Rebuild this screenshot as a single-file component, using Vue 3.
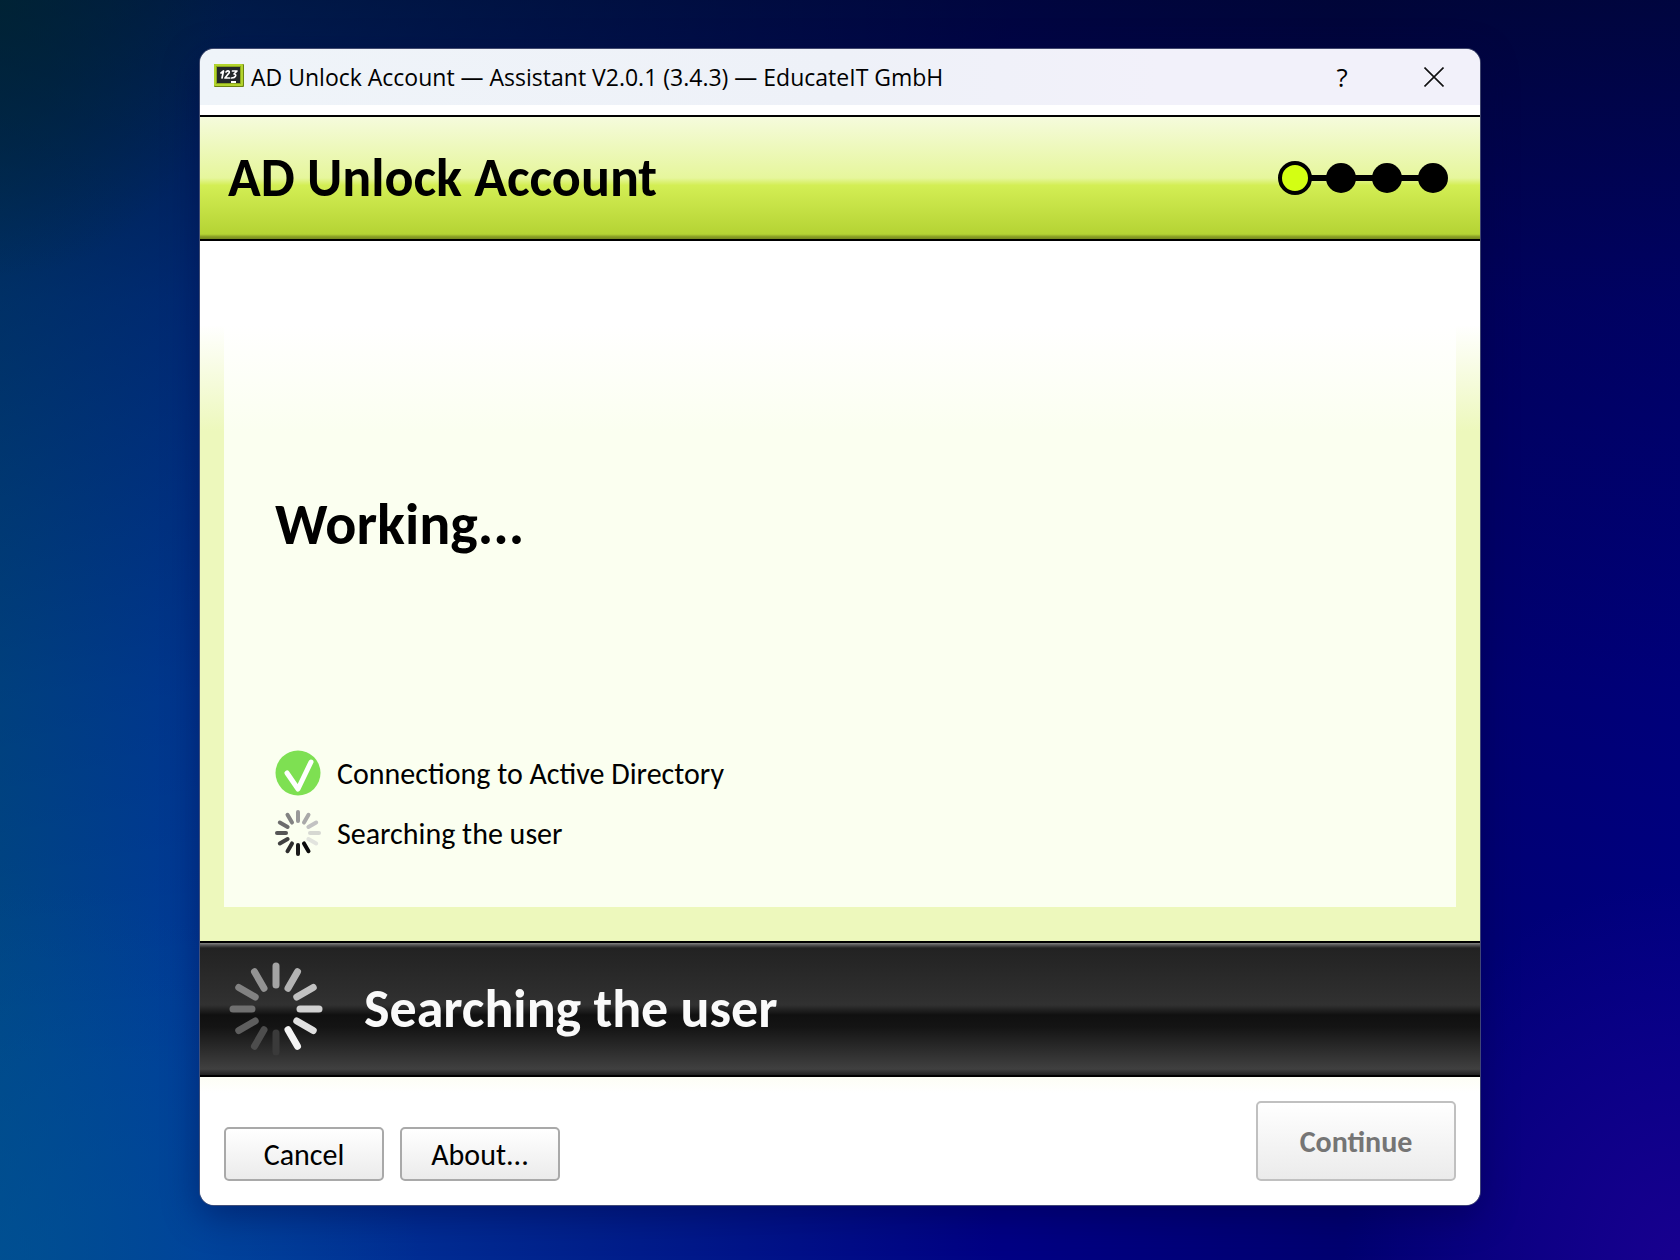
<script setup>
const steps = [true, false, false, false]
const darkSpokes = ['#999', '#a9a9a9', '#c2c2c2', '#d6d8d2', '#e2e4de', '#0a0a0a', '#1a1a1a', '#2e2e2e', '#414141', '#565656', '#6c6c6c', '#828282']
const lightSpokes = ['#a4a4a4', '#b3b3b3', '#c2c2c2', '#d1d1d1', '#e0e0e0', '#f4f4f4', '#3a3a3a', '#4d4d4d', '#5e5e5e', '#707070', '#828282', '#939393']
</script>

<template>
  <div class="desktop">
    <section class="window">
      <header class="titlebar">
        <svg class="app-icon" viewBox="0 0 30 23" aria-hidden="true">
          <rect width="30" height="23" rx="1" fill="#6c8312" />
          <rect width="29" height="22" rx="1" fill="#b2d42c" />
          <rect x="2" y="2" width="25" height="18" fill="#8aa51e" />
          <rect x="3" y="3" width="23" height="16" fill="#23282a" />
          <g fill="none" stroke="#fff" stroke-width="1.7" stroke-linecap="round" stroke-linejoin="round">
            <path d="M7 9l2.500-2-1.500 7" />
            <path d="M12 8c2-2 4-1 3 1l-4 5h4.500" />
            <path d="M18.500 7h4.500l-3 3c3 0 2 4-2.500 4" />
          </g>
          <rect x="17" y="17" width="5" height="2" fill="#fff" />
        </svg>
        <span class="caption">AD Unlock Account — Assistant V2.0.1 (3.4.3) — EducateIT GmbH</span>
        <button class="tool help" type="button" aria-label="Help">?</button>
        <button class="tool" type="button" aria-label="Close">
          <svg width="20" height="20" viewBox="0 0 20 20"><path d="M0.5 0.5l19 19M19.5 0.5l-19 19" stroke="#111" stroke-width="1.6" /></svg>
        </button>
      </header>

      <div class="banner">
        <h1>AD Unlock Account</h1>
        <ol class="steps" aria-label="Progress">
          <li v-for="(current, i) in steps" :key="i" :class="{ current }"></li>
        </ol>
      </div>

      <main class="body">
        <div class="panel">
          <h2>Working...</h2>
          <ul class="tasks">
            <li>
              <svg width="46" height="46" viewBox="0 0 46 46" aria-hidden="true">
                <circle cx="23" cy="23" r="22.5" fill="#7ee052" />
                <path d="M12 23l11 16L36 12" fill="none" stroke="#fff" stroke-width="5" stroke-linecap="round" stroke-linejoin="round" />
              </svg>
              Connectiong to Active Directory
            </li>
            <li>
              <svg width="46" height="46" viewBox="0 0 46 46" aria-hidden="true">
                <line v-for="(c, i) in darkSpokes" :key="i" x1="23" y1="2" x2="23" y2="11" :stroke="c" stroke-width="4" stroke-linecap="round" :transform="`rotate(${i * 30} 23 23)`" />
              </svg>
              Searching the user
            </li>
          </ul>
        </div>
      </main>

      <div class="status">
        <svg width="94" height="94" viewBox="0 0 94 94" aria-hidden="true">
          <line v-for="(c, i) in lightSpokes" :key="i" x1="47" y1="4" x2="47" y2="23" :stroke="c" stroke-width="7" stroke-linecap="round" :transform="`rotate(${i * 30} 47 47)`" />
        </svg>
        <span>Searching the user</span>
      </div>

      <footer class="actions">
        <button type="button">Cancel</button>
        <button type="button">About...</button>
        <button class="next" type="button" disabled>Continue</button>
      </footer>
    </section>
  </div>
</template>

<style>
body {
  margin: 0;
}
</style>

<style scoped>
.desktop {
  box-sizing: border-box;
  display: flex;
  min-height: 100vh;
  padding: 48px 199px 54px;
  background:
    radial-gradient(ellipse 14% 22% at 0% 0%, rgba(0, 36, 48, 0.7), transparent),
    radial-gradient(ellipse 25% 30% at 0% 100%, rgba(0, 84, 152, 0.6), transparent),
    radial-gradient(ellipse 20% 30% at 100% 100%, rgba(30, 0, 145, 0.8), transparent),
    linear-gradient(to bottom, rgba(0, 8, 26, 0.65), rgba(0, 4, 40, 0.35) 24%, rgba(0, 0, 50, 0.12) 55%, transparent 85%),
    linear-gradient(to right, #004888, #003c9c 12%, #00208c 35%, #000084 60%, #000070 80%, #000084);
  font-family: Carlito, Lato, sans-serif;
  color: #000;
}

.window {
  flex: 1;
  display: flex;
  flex-direction: column;
  overflow: hidden;
  border: 1px solid rgba(80, 88, 120, 0.8);
  border-radius: 15px;
  background: #fff;
  background-clip: padding-box;
  box-shadow: 0 10px 36px rgba(0, 0, 60, 0.4);
}

.titlebar {
  display: flex;
  align-items: center;
  height: 56px;
  padding-left: 14px;
  background: linear-gradient(to right, #eff4f9, #eef1f8 50%, #f2f1fa 75%);
  font-family: "Open Sans", "Noto Sans", sans-serif;
  font-size: 23px;
}

.app-icon {
  width: 30px;
  height: 23px;
  margin-bottom: 4px;
}

.caption {
  flex: 1;
  padding-left: 7px;
  white-space: nowrap;
}

.tool {
  display: flex;
  align-items: center;
  justify-content: center;
  width: 92px;
  height: 54px;
  padding: 0;
  border: 0;
  background: none;
  color: #000;
  font: inherit;
}

.tool.help {
  font-size: 26px;
}

.banner {
  display: flex;
  align-items: center;
  justify-content: space-between;
  height: 122px;
  margin-top: 10px;
  padding: 0 32px 0 28px;
  border: solid #000;
  border-width: 2px 0;
  background: linear-gradient(to bottom, #f5fbdc, #e6f69c 50%, #d3ee54 56%, #b5d334 96%, #8ba026 98%, #76881f);
}

h1,
h2 {
  margin: 0;
  font-weight: 700;
}

h1,
.status {
  font-size: 54px;
  line-height: 60px;
}

h2 {
  font-size: 58px;
  line-height: 64px;
}

.steps {
  display: flex;
  align-items: center;
  margin: 0;
  padding: 0;
  list-style: none;
}

.steps li {
  width: 30px;
  height: 30px;
  border-radius: 50%;
  background: #000;
}

.steps li + li {
  position: relative;
  margin-left: 16px;
}

.steps li + li::before {
  content: "";
  position: absolute;
  right: 28px;
  top: 12px;
  width: 20px;
  height: 6px;
  background: #000;
}

.steps .current {
  box-sizing: border-box;
  width: 34px;
  height: 34px;
  margin-right: -2px;
  border: 4px solid #000;
  background: #d3ff13;
}

.body {
  flex: 1;
  display: flex;
  padding: 0 24px 34px;
  background: linear-gradient(to bottom, #fff 84px, #edf8bc 190px);
}

.panel {
  flex: 1;
  display: flex;
  flex-direction: column;
  justify-content: space-between;
  padding: 252px 51px 46px;
  background: linear-gradient(to bottom, #fff 84px, #fbfff0 190px);
}

.tasks {
  display: grid;
  gap: 4px;
  margin: 0;
  padding: 0;
  list-style: none;
}

.tasks li {
  display: flex;
  align-items: center;
  gap: 16px;
  height: 56px;
  font-size: 30px;
}

.status {
  display: flex;
  align-items: center;
  gap: 41px;
  height: 132px;
  padding-left: 29px;
  border: solid #000;
  border-width: 2px 0;
  background: linear-gradient(to bottom, #858585, #555 2px, #222 5px, #313131 62px, #101010 72px, #141414 84px, #404040 126px, #222);
  color: #fafafa;
  font-weight: 700;
}

.actions {
  display: flex;
  align-items: flex-end;
  gap: 16px;
  padding: 24px;
  background: linear-gradient(to bottom, #fdfef5, #fff 16px);
}

.actions button {
  width: 160px;
  height: 54px;
  padding: 0;
  border: 2px solid #a9a9a9;
  border-radius: 5px;
  background: linear-gradient(to bottom, #fff, #ebebeb);
  color: #000;
  font-family: inherit;
  font-size: 30px;
}

.actions .next {
  width: 200px;
  height: 80px;
  margin-left: auto;
  border-color: #c0c0c0;
  color: #757575;
  font-weight: 700;
}
</style>
